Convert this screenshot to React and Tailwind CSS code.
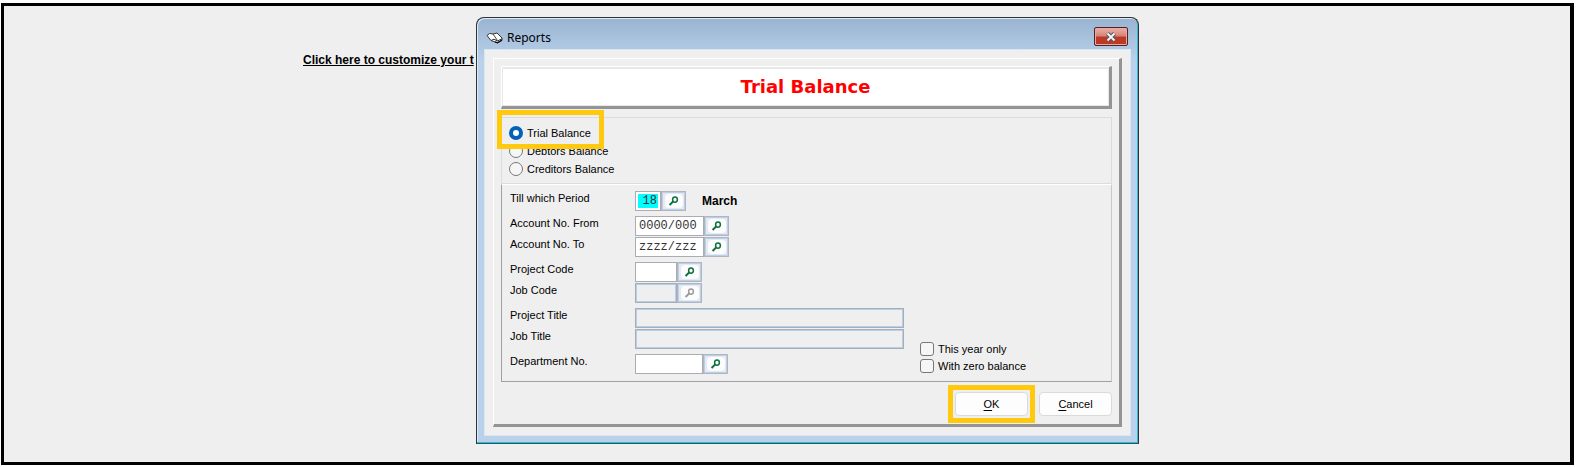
import { useState } from "react";

const BookIcon = () => (
  <svg width="17" height="12" viewBox="0 0 17 12" aria-hidden="true">
    <path d="M1 3.5 L3.5 1.5 L7 2 L11 1 L16 6 L16 8 L11.5 10.8 L5 8.5 Z" fill="#fff" stroke="#333" strokeWidth="1" strokeLinejoin="round" />
    <path d="M7 2 L11.5 8.5" fill="none" stroke="#444" strokeWidth="1" />
    <path d="M5 8.5 L8 7.2 L11.5 9 L15.8 6.8" fill="none" stroke="#333" strokeWidth="1" />
    <path d="M9 9.8 L11.5 10.8 L16 8.2" fill="none" stroke="#111" strokeWidth="1.4" />
  </svg>
);

const LookupIcon = () => (
  <svg width="11" height="10" viewBox="0 0 11 10" fill="none" stroke="currentColor" aria-hidden="true">
    <ellipse cx="7" cy="3.6" rx="2.4" ry="2.6" strokeWidth="1.5" />
    <path d="M5.2 5.4 L1.6 9" strokeWidth="2" />
  </svg>
);

const LookupButton = ({ label, disabled }) => (
  <button
    type="button"
    aria-label={label}
    disabled={disabled}
    className="flex h-5 w-[25px] items-center justify-center border border-[#b0b6c0] bg-[#e6e9ef] text-[#0c7040] ring-1 ring-inset ring-[#b9cfea] disabled:text-[#9a9a9a]"
  >
    <span className="flex h-3.5 w-[18px] items-center justify-center rounded-sm bg-[#fcfcfc]">
      <LookupIcon />
    </span>
  </button>
);

const fields = [
  { id: "period", label: "Till which Period", value: "18", width: "w-[26px]", lookup: true, note: "March", selected: true },
  { id: "accountFrom", label: "Account No. From", value: "0000/000", width: "w-[69px]", lookup: true, gap: true },
  { id: "accountTo", label: "Account No. To", value: "zzzz/zzz", width: "w-[69px]", lookup: true },
  { id: "projectCode", label: "Project Code", value: "", width: "w-[42px]", lookup: true, gap: true },
  { id: "jobCode", label: "Job Code", value: "", width: "w-[42px]", lookup: true, disabled: true },
  { id: "projectTitle", label: "Project Title", value: "", width: "w-[269px]", disabled: true, gap: true },
  { id: "jobTitle", label: "Job Title", value: "", width: "w-[269px]", disabled: true },
  { id: "department", label: "Department No.", value: "", width: "w-[68px]", lookup: true, gap: true },
];

const Field = ({ field, value, onChange }) => (
  <div className={`flex items-start ${field.gap ? "mt-[5px]" : "mt-px"}`}>
    <label htmlFor={field.id} className="w-[125px] shrink-0">
      {field.label}
    </label>
    <div className="flex h-5 items-center">
      <input
        id={field.id}
        type="text"
        value={value}
        onChange={onChange}
        disabled={field.disabled}
        className={`h-5 border border-[#a9adb3] font-['Liberation_Mono',monospace] text-xs text-[#333] outline-none disabled:bg-[#efefef] disabled:ring-1 disabled:ring-inset disabled:ring-[#b5cfee] ${field.width} ${
          field.selected ? "bg-[#00ffff] pr-[3px] text-right ring-2 ring-inset ring-white" : "bg-white px-[3px]"
        }`}
      />
      {field.lookup && <LookupButton label={`Find ${field.label}`} disabled={field.disabled} />}
      {field.note && <span className="ml-4 text-xs font-bold text-black">{field.note}</span>}
    </div>
  </div>
);

const reports = ["Trial Balance", "Debtors Balance", "Creditors Balance"];

const ReportOption = ({ name, checked, onSelect }) => (
  <label className="flex h-[18px] items-center gap-1">
    <input
      type="radio"
      name="report"
      checked={checked}
      onChange={onSelect}
      className="size-3.5 appearance-none rounded-full border border-[#777] bg-[#f6f6f6] checked:border-4 checked:border-[#0560b8] checked:bg-white"
    />
    {name}
  </label>
);

const Option = ({ name }) => (
  <label className="flex h-[17px] items-center gap-1">
    <input type="checkbox" className="size-3.5 appearance-none rounded-[3px] border border-[#777] bg-[#f6f6f6]" />
    {name}
  </label>
);

const ActionButton = ({ first, rest }) => (
  <button type="button" className="h-6 w-[73px] rounded border border-[#dadada] bg-[#fdfdfd] text-center">
    <span className="underline underline-offset-2">{first}</span>
    {rest}
  </button>
);

const ReportsDialog = () => {
  const [report, setReport] = useState("Trial Balance");
  const [values, setValues] = useState(Object.fromEntries(fields.map((f) => [f.id, f.value])));

  const handleChange = (id) => (e) => {
    setValues({ ...values, [id]: e.target.value });
  };

  return (
    <div
      role="dialog"
      aria-labelledby="dialog-title"
      className="absolute top-[11px] left-[472px] w-[663px] rounded-t-lg border border-[#2e3338] border-b-[#17636c] bg-[#b9d1ea] bg-linear-to-b from-[#99b4d1] to-[#b9d1ea] to-10% px-[7px] pb-[7px] text-[11px] leading-[14px] text-black shadow-[inset_-1px_-1px_0_#35b6cc,inset_1px_1px_0_#dfeaf5]"
    >
      <div className="flex h-[31px] items-center justify-between pr-[3px] pl-0.5">
        <h1 id="dialog-title" className="flex items-center gap-1 pt-2 font-['Noto_Sans','Open_Sans',sans-serif] text-xs">
          <BookIcon />
          Reports
        </h1>
        <button
          type="button"
          aria-label="Close"
          className="mt-1.5 flex h-[19px] w-[34px] items-center justify-center rounded-xs border border-[#54212b] bg-linear-to-b from-[#e8a79d] from-10% via-[#d78578] via-45% to-[#bb3a25] to-55% ring-1 ring-inset ring-[#e8a9a0]"
        >
          <svg width="12" height="10" viewBox="0 0 12 10" aria-hidden="true">
            <path d="M2.5 1.5 L9.5 8.5 M9.5 1.5 L2.5 8.5" stroke="#535666" strokeWidth="4" />
            <path d="M2.5 1.5 L9.5 8.5 M9.5 1.5 L2.5 8.5" stroke="#f4f4f4" strokeWidth="2" />
          </svg>
        </button>
      </div>

      <div className="border border-[#dbe6f3] bg-[#efefef] p-2">
        <form className="border-t border-r-[3px] border-b-[3px] border-l border-t-white border-r-[#949494] border-b-[#949494] border-l-white px-[7px] pt-[7px] pb-2">
          <div className="border-t border-r-[3px] border-b-[3px] border-l border-t-white border-r-[#949494] border-b-[#949494] border-l-white">
            <h2 className="border border-t-2 border-[#e8e8e8] bg-white py-1.5 text-center font-['DejaVu_Sans',sans-serif] text-lg leading-6 font-bold text-[#ff0000]">
              Trial Balance
            </h2>
          </div>

          <fieldset className="relative mt-2 border border-[#dcdcdc] px-[7px] pt-[6px] pb-[5px]">
            {reports.map((name) => (
              <ReportOption key={name} name={name} checked={report === name} onSelect={() => setReport(name)} />
            ))}
            <div className="pointer-events-none absolute -top-2 -left-[5px] h-[39px] w-[107px] border-[5px] border-[#ffc90e]" />
          </fieldset>

          <div className="flex items-end border border-t-white border-r-[#c8c8c8] border-b-[#a0a0a0] border-l-[#a0a0a0] pt-[5px] pb-[7px] pl-2">
            <div>
              {fields.map((field) => (
                <Field key={field.id} field={field} value={values[field.id]} onChange={handleChange(field.id)} />
              ))}
            </div>
            <div className="ml-4">
              <Option name="This year only" />
              <Option name="With zero balance" />
            </div>
          </div>

          <div className="mt-2.5 flex justify-end gap-[11px]">
            <div className="relative">
              <ActionButton first="O" rest="K" />
              <div className="pointer-events-none absolute -inset-x-[7px] -inset-y-[7px] border-[5px] border-[#ffc90e]" />
            </div>
            <ActionButton first="C" rest="ancel" />
          </div>
        </form>
      </div>
    </div>
  );
};

const App = () => {
  return (
    <div className="h-screen bg-white pt-[3px] pr-0.5 pb-0.5 pl-px font-['Liberation_Sans',Arial,sans-serif]">
      <main className="relative h-full border-[3px] border-r-4 border-black bg-[#efefef]">
        <a href="#customize" className="ml-[299px] inline-block pt-[46px] text-xs leading-4 font-bold text-black underline">
          Click here to customize your t
        </a>
        <ReportsDialog />
      </main>
    </div>
  );
};

export default App;
